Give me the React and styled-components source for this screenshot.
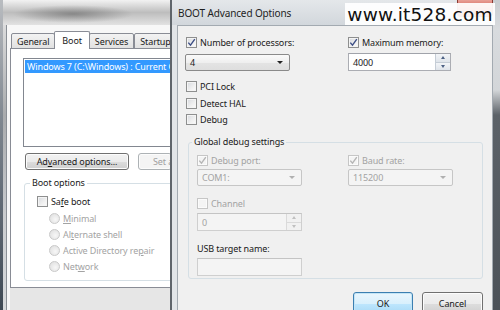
import React from 'react'
import styled, { createGlobalStyle } from 'styled-components'

const GlobalStyle = createGlobalStyle`
  html, body {
    margin: 0;
    padding: 0;
    background: #3d4650;
  }
  body {
    font-family: 'Noto Sans', 'Open Sans', sans-serif;
    font-size: 9px;
    letter-spacing: -0.12px;
    color: #1a1a1a;
  }
`

const Desktop = styled.div`
  position: relative;
  width: 500px;
  height: 310px;
  overflow: hidden;
  background: linear-gradient(180deg, #b9bcc0 0%, #7d858e 40%, #3e4853 100%);
`

/* ---------- back window (System Configuration) ---------- */

const BackWindow = styled.div`
  position: absolute;
  z-index: 0;
  left: 3px;
  top: 0;
  width: 240px;
  height: 330px;
  display: flex;
  flex-direction: column;
  background: linear-gradient(180deg, #e9e9e9 0%, #a9abad 35%, #c9cbcd 65%, #d9dbdd 100%);
`

const BackTitle = styled.div`
  height: 25px;
  flex-shrink: 0;
  background:
    radial-gradient(ellipse 60px 9px at 70px 14px, rgba(80, 80, 80, 0.5), transparent),
    linear-gradient(180deg, #f2f2f2 0%, #bdbdbd 50%, #e2e2e2 100%);
`

const BackClient = styled.div`
  flex: 1;
  margin-left: 3px;
  border-left: 1px solid #8a8f95;
  background: #f7f7f7;
  padding: 6px 0 0 3px;
  display: flex;
  flex-direction: column;
`

const TabRow = styled.div`
  display: flex;
  align-items: flex-end;
  height: 18px;
  padding-left: 1px;
  margin-bottom: -1px;
  position: relative;
  z-index: 1;
`

const Tab = styled.div`
  box-sizing: border-box;
  height: ${p => (p.$active ? 18 : 16)}px;
  padding: 0 ${p => (p.$active ? 7 : 5)}px;
  margin: 0 ${p => (p.$active ? -1 : 0)}px;
  border: 1px solid #898c95;
  border-bottom: ${p => (p.$active ? 'none' : '1px solid #898c95')};
  border-radius: 2px 2px 0 0;
  background: ${p => (p.$active ? '#ffffff' : 'linear-gradient(180deg, #f3f3f3, #e1e1e1)')};
  display: flex;
  align-items: ${p => (p.$active ? 'flex-start' : 'center')};
  padding-top: ${p => (p.$active ? 2 : 0)}px;
  white-space: nowrap;
  position: relative;
  z-index: ${p => (p.$active ? 2 : 1)};
`

const TabPanel = styled.div`
  box-sizing: border-box;
  height: 240px;
  border: 1px solid #898c95;
  background: #ffffff;
  padding: 9px 0 0 12px;
  display: flex;
  flex-direction: column;
`

const ListBox = styled.div`
  width: 154px;
  height: 89px;
  box-sizing: border-box;
  border: 1px solid #828790;
  border-right: none;
  background: #fff;
  padding: 1px 0 1px 1px;
  overflow: hidden;
`

const ListItem = styled.div`
  height: 13px;
  line-height: 13px;
  background: #3399ff;
  color: #fff;
  padding-left: 2px;
  white-space: nowrap;
  overflow: hidden;
`

const ButtonRow = styled.div`
  display: flex;
  gap: ${p => p.$gap || 9}px;
  margin-top: ${p => p.$top || 0}px;
  justify-content: ${p => (p.$end ? 'flex-end' : 'flex-start')};
  margin-left: ${p => p.$left || 0}px;
`

const Button = styled.div`
  box-sizing: border-box;
  width: ${p => p.$w}px;
  height: ${p => p.$h || 17}px;
  border: 1px solid ${p => (p.$default ? '#3c7fb1' : p.$disabled ? '#adb2b5' : '#707070')};
  border-radius: 3px;
  background: ${p =>
    p.$default
      ? 'linear-gradient(180deg, #eaf6fd 0%, #d9f0fc 50%, #bee6fd 51%, #a7d9f5 100%)'
      : p.$disabled
      ? '#f4f4f4'
      : 'linear-gradient(180deg, #f2f2f2 0%, #ebebeb 50%, #dddddd 51%, #cfcfcf 100%)'};
  box-shadow: inset 0 0 0 1px ${p => (p.$default ? '#c4e5f6' : '#fcfcfc')};
  color: ${p => (p.$disabled ? '#a0a0a0' : '#1a1a1a')};
  display: flex;
  align-items: center;
  justify-content: ${p => (p.$left ? 'flex-start' : 'center')};
  padding-left: ${p => (p.$left ? 14 : 0)}px;
  white-space: nowrap;
  overflow: hidden;
`

const Group = styled.fieldset`
  margin: ${p => p.$margin || '0'};
  padding: ${p => p.$pad || '0'};
  border: 1px solid #d5dfe5;
  border-radius: 3px;
  min-width: 0;
  box-sizing: border-box;
  height: ${p => (p.$h ? `${p.$h}px` : 'auto')};
  width: ${p => (p.$w ? `${p.$w}px` : 'auto')};
`

const Legend = styled.legend`
  padding: 0 2px;
  margin-left: ${p => p.$shift || 0}px;
  line-height: 12px;
  color: #1a1a1a;
`

const OptionList = styled.div`
  display: flex;
  flex-direction: column;
  gap: ${p => p.$gap || 5}px;
  padding-left: ${p => p.$indent || 0}px;
  margin-top: ${p => p.$top || 0}px;
`

const BackBottom = styled.div`
  flex: 1;
  background: #e6e6e6;
`

/* ---------- controls ---------- */

const OptionRow = styled.div`
  display: flex;
  align-items: center;
  gap: 3px;
  height: 11px;
  line-height: 11px;
  white-space: nowrap;
  color: ${p => (p.$disabled ? '#a3a3a3' : '#1a1a1a')};
`

const CheckBox = styled.span`
  box-sizing: border-box;
  width: 11px;
  height: 11px;
  flex-shrink: 0;
  border: 1px solid ${p => (p.$disabled ? '#c6c6c6' : '#8e8f8f')};
  background: ${p =>
    p.$disabled ? '#f4f4f4' : 'linear-gradient(135deg, #d6d9de 0%, #f0f0f0 60%, #fcfcfc 100%)'};
  box-shadow: inset 0 0 0 1px ${p => (p.$disabled ? '#fbfbfb' : '#f4f4f4')};
  display: flex;
  align-items: center;
  justify-content: center;
`

const RadioDot = styled.span`
  box-sizing: border-box;
  width: 11px;
  height: 11px;
  flex-shrink: 0;
  border-radius: 50%;
  border: 1px solid #c9c9c9;
  background: radial-gradient(circle at 60% 60%, #f7f7f7, #dcdcdc);
`

const Key = styled.span`
  text-decoration: underline;
`

function Check({ checked, disabled, children }) {
  return (
    <OptionRow $disabled={disabled}>
      <CheckBox $disabled={disabled}>
        {checked && (
          <svg width="9" height="9" viewBox="0 0 9 9">
            <path
              d="M1.3 4.6 L3.5 7.2 L7.8 1.2"
              fill="none"
              stroke={disabled ? '#b5b5b5' : '#3d4f86'}
              strokeWidth="1.4"
            />
          </svg>
        )}
      </CheckBox>
      <span>{children}</span>
    </OptionRow>
  )
}

function Radio({ children }) {
  return (
    <OptionRow $disabled>
      <RadioDot />
      <span>{children}</span>
    </OptionRow>
  )
}

const ComboBox = styled.div`
  box-sizing: border-box;
  width: 105px;
  height: 17px;
  border: 1px solid ${p => (p.$disabled ? '#c6c6c6' : '#8a8a8a')};
  border-radius: 2px;
  background: ${p =>
    p.$disabled ? '#f4f4f4' : 'linear-gradient(180deg, #fafafa 0%, #efefef 50%, #e4e4e4 51%, #dedede 100%)'};
  color: ${p => (p.$disabled ? '#a3a3a3' : '#1a1a1a')};
  display: flex;
  align-items: center;
  justify-content: space-between;
  padding: 0 6px 0 4px;
  margin-left: ${p => p.$shift || 0}px;
`

const Arrow = styled.span`
  width: 0;
  height: 0;
  border-left: 3px solid transparent;
  border-right: 3px solid transparent;
  border-top: 3px solid ${p => (p.$disabled ? '#b0b0b0' : '#222')};
`

const Field = styled.div`
  box-sizing: border-box;
  width: ${p => p.$w || 105}px;
  height: 18px;
  border: 1px solid ${p => (p.$disabled ? '#cfcfcf' : '#abadb3')};
  border-top-color: ${p => (p.$disabled ? '#c4c4c4' : '#a0a3aa')};
  background: ${p => (p.$disabled ? '#f4f4f4' : '#ffffff')};
  color: ${p => (p.$disabled ? '#a3a3a3' : '#1a1a1a')};
  display: flex;
  align-items: stretch;
`

const FieldText = styled.span`
  flex: 1;
  display: flex;
  align-items: center;
  padding-left: 4px;
`

const SpinBox = styled.div`
  width: 14px;
  display: flex;
  flex-direction: column;
  border-left: 1px solid ${p => (p.$disabled ? '#dadada' : '#c5cdd6')};
`

const SpinHalf = styled.span`
  flex: 1;
  display: flex;
  align-items: center;
  justify-content: center;
  background: ${p => (p.$disabled ? '#f1f1f1' : 'linear-gradient(180deg, #f3f5f8, #dfe4ea)')};
  border-bottom: ${p => (p.$top ? `1px solid ${p.$disabled ? '#dadada' : '#c5cdd6'}` : 'none')};
`

const SpinArrow = styled.span`
  width: 0;
  height: 0;
  border-left: 2.5px solid transparent;
  border-right: 2.5px solid transparent;
  ${p => (p.$up ? 'border-bottom' : 'border-top')}: 3px solid ${p => (p.$disabled ? '#c0c0c0' : '#4d6185')};
`

function Spin({ value, disabled, width }) {
  return (
    <Field $disabled={disabled} $w={width}>
      <FieldText>{value}</FieldText>
      <SpinBox $disabled={disabled}>
        <SpinHalf $top $disabled={disabled}>
          <SpinArrow $up $disabled={disabled} />
        </SpinHalf>
        <SpinHalf $disabled={disabled}>
          <SpinArrow $disabled={disabled} />
        </SpinHalf>
      </SpinBox>
    </Field>
  )
}

function Combo({ value, disabled, shift }) {
  return (
    <ComboBox $disabled={disabled} $shift={shift}>
      <span>{value}</span>
      <Arrow $disabled={disabled} />
    </ComboBox>
  )
}

/* ---------- front dialog ---------- */

const Dialog = styled.div`
  position: absolute;
  z-index: 1;
  left: 170px;
  top: 0;
  width: 330px;
  height: 330px;
  display: flex;
  flex-direction: column;
  border-left: 2px solid #5f656b;
  box-sizing: border-box;
  background:
    linear-gradient(180deg, #c9cdd1 0, #d8dbde 30px, #d3d6d9 90px, #5c6268 115px, #4a5057 100%) right top / 7px 100% no-repeat,
    linear-gradient(90deg, #e2e5e8 0%, #d6dade 100%);
`

const DialogTitle = styled.div`
  height: 25px;
  flex-shrink: 0;
  display: flex;
  align-items: center;
  padding-left: 6px;
  font-size: 10px;
  color: #1e1e1e;
  background: linear-gradient(180deg, #e4e7ea 0%, #d2d7dc 100%);
  margin-right: 7px;
`

const DialogBody = styled.div`
  flex: 1;
  margin: 0 7px 0 5px;
  border: 1px solid #a3aab1;
  border-bottom: none;
  background: #f0f0f0;
  padding: 11px 9px 0 8px;
  display: flex;
  flex-direction: column;
`

const TwoCol = styled.div`
  display: grid;
  grid-template-columns: ${p => p.$first}px 1fr;
  row-gap: ${p => p.$gap || 4}px;
  align-items: end;
`

const Stack = styled.div`
  display: flex;
  flex-direction: column;
  gap: ${p => p.$gap || 4}px;
  margin-top: ${p => p.$top || 0}px;
`

const PlainLabel = styled.div`
  height: 11px;
  line-height: 11px;
  color: #1a1a1a;
`

const CloseButton = styled.div`
  position: absolute;
  z-index: 2;
  left: 457px;
  top: 0;
  width: 36px;
  height: 17px;
  border-radius: 0 0 4px 4px;
  background: linear-gradient(180deg, #e8a198 0%, #d1554a 60%, #c0392b 100%);
  border: 1px solid #8a3a33;
  border-top: none;
  box-sizing: border-box;
`

const Watermark = styled.div`
  position: absolute;
  z-index: 3;
  left: 345px;
  top: 3px;
  width: 150px;
  height: 22px;
  background: rgba(255, 255, 255, 0.93);
  display: flex;
  align-items: center;
  justify-content: center;
  font-family: 'DejaVu Sans', sans-serif;
  font-size: 18.5px;
  color: #111;
  letter-spacing: 0.2px;
`

export default function App() {
  return (
    <>
      <GlobalStyle />
      <Desktop>
        <BackWindow>
          <BackTitle />
          <BackClient>
            <TabRow>
              <Tab>General</Tab>
              <Tab $active>Boot</Tab>
              <Tab>Services</Tab>
              <Tab>Startup</Tab>
            </TabRow>
            <TabPanel>
              <ListBox>
                <ListItem>Windows 7 (C:\Windows) : Current OS; Default OS</ListItem>
              </ListBox>
              <ButtonRow $top={6} $left={2}>
                <Button $w={104}>
                  Ad<Key>v</Key>anced options...
                </Button>
                <Button $w={34} $disabled $left>
                  Set as default
                </Button>
              </ButtonRow>
              <Group $margin="7px 0 0 1px" $pad="7px 0 0 12px" $w={210} $h={104}>
                <Legend $shift={-7}>Boot options</Legend>
                <Check>
                  Sa<Key>f</Key>e boot
                </Check>
                <OptionList $indent={12} $top={6} $gap={5}>
                  <Radio>
                    <Key>M</Key>inimal
                  </Radio>
                  <Radio>
                    Al<Key>t</Key>ernate shell
                  </Radio>
                  <Radio>
                    Active Directory re<Key>p</Key>air
                  </Radio>
                  <Radio>
                    Net<Key>w</Key>ork
                  </Radio>
                </OptionList>
              </Group>
            </TabPanel>
            <BackBottom />
          </BackClient>
        </BackWindow>

        <Dialog>
          <DialogTitle>BOOT Advanced Options</DialogTitle>
          <DialogBody>
            <TwoCol $first={162} $gap={5}>
              <Check checked>Number of processors:</Check>
              <Check checked>Maximum memory:</Check>
              <Combo value="4" shift={-1} />
              <Spin value="4000" width={103} />
            </TwoCol>

            <OptionList $top={10} $gap={5.5}>
              <Check>PCI Lock</Check>
              <Check>Detect HAL</Check>
              <Check>Debug</Check>
            </OptionList>

            <Group $margin="11px 0 0 2px" $pad="7px 0 0 8px" $h={143}>
              <Legend $shift={-5}>Global debug settings</Legend>
              <TwoCol $first={151} $gap={3}>
                <Check checked disabled>
                  Debug port:
                </Check>
                <Check checked disabled>
                  Baud rate:
                </Check>
                <Combo value="COM1:" disabled />
                <Combo value="115200" disabled />
              </TwoCol>
              <Stack $top={12} $gap={4}>
                <Check disabled>Channel</Check>
                <Spin value="0" disabled />
              </Stack>
              <Stack $top={12} $gap={4}>
                <PlainLabel>USB target name:</PlainLabel>
                <Field $disabled />
              </Stack>
            </Group>

            <ButtonRow $top={13} $end $gap={9}>
              <Button $w={60} $h={23} $default>
                OK
              </Button>
              <Button $w={61} $h={23}>
                Cancel
              </Button>
            </ButtonRow>
          </DialogBody>
        </Dialog>

        <CloseButton />
        <Watermark>www.it528.com</Watermark>
      </Desktop>
    </>
  )
}
